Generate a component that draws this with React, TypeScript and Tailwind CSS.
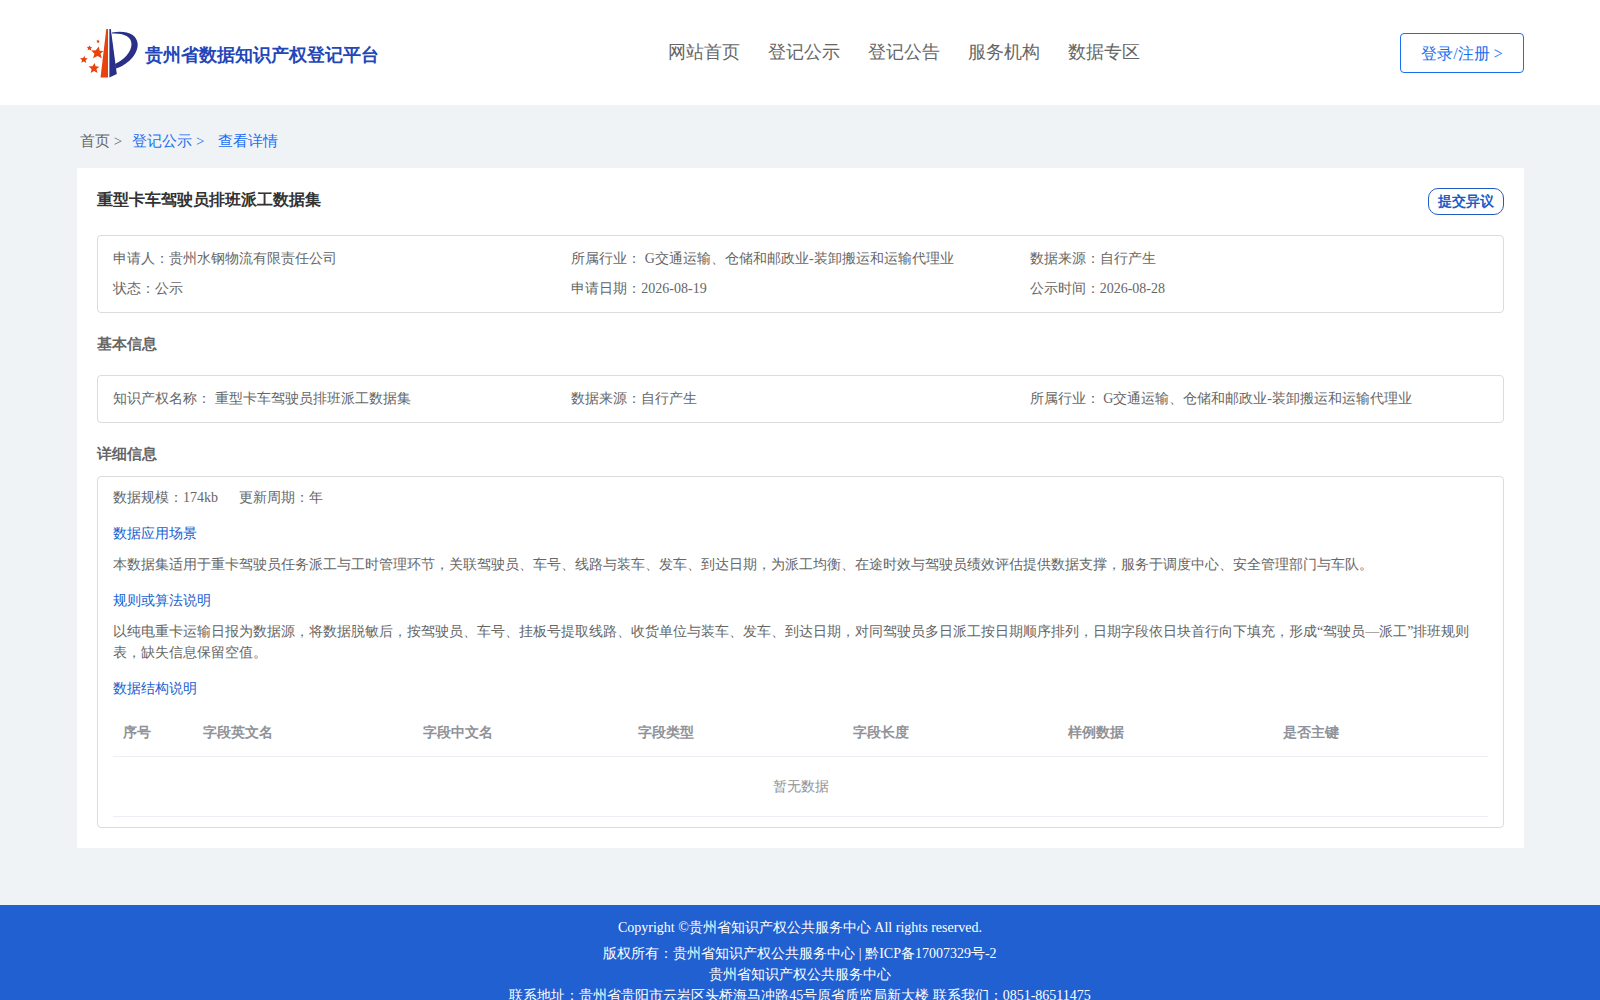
import React from 'react';

const navItems = ['网站首页', '登记公示', '登记公告', '服务机构', '数据专区'];

const summary = [
  '申请人：贵州水钢物流有限责任公司',
  '所属行业： G交通运输、仓储和邮政业-装卸搬运和运输代理业',
  '数据来源：自行产生',
  '状态：公示',
  '申请日期：2026-08-19',
  '公示时间：2026-08-28',
];

const basicInfo = [
  '知识产权名称： 重型卡车驾驶员排班派工数据集',
  '数据来源：自行产生',
  '所属行业： G交通运输、仓储和邮政业-装卸搬运和运输代理业',
];

const columns = ['序号', '字段英文名', '字段中文名', '字段类型', '字段长度', '样例数据', '是否主键'];

const Logo = () => (
  <svg viewBox="0 0 58 52" className="h-[52px] w-[58px]" aria-hidden="true">
    <path d="M26.300 2h1.700v48.500h-7.500z" fill="#e8430f" />
    <path d="M29.400 2h1.400L36.800 47l-7.400 3.500z" fill="#2a2f87" />
    <path
      d="M32 5.500C46 3 57 7 57.700 17C58 28 47 38 36 41.500L35 37C44 33 51.500 25 51.500 17C51.500 9 43 6 32 6.500z"
      fill="#2a2f87"
    />
    <g fill="#e8430f">
      <path d="M18.800 19.500l.9 4.200 3.800.3-3 2.500 1.300 4.800-4.200-2.400-4.500 2.400 1.300-4.600-3.200-3.200 4.600-.2z" />
      <path d="M14.700 36l.8 3.300 3.900.4-3 2.300 1.200 4-3.600-2-3.300 2 .9-3.900-3.200-2.600 4-.2z" />
      <path d="M4.300 28.800l.8 2.300 2.600.4-2 1.700.5 2.700-2.300-1.300-2.600 1.200.8-2.600L.100 31.200l3-.2z" />
      <path d="M9.800 18.400l.6 1.500 1.700.3-1.200 1.200.2 2-1.700-1-1.800.8.500-1.900-1.300-1.400 2-.1z" />
      <path d="M18 12.600l.5 1 1.200.3-.8.8.2 1.300-1.100-.6-1.200.4.300-1.200-.8-.9 1.300-.1z" />
    </g>
  </svg>
);

const InfoBox = ({ items }: { items: string[] }) => (
  <div className="grid grid-cols-3 rounded border border-[#dcdcdc] px-[15px] py-2">
    {items.map((item) => (
      <p key={item} className="leading-[30px]">{item}</p>
    ))}
  </div>
);

const App = () => {
  return (
    <div className="min-h-screen bg-[#eff3f6] font-['Liberation_Serif',serif] text-sm text-[#666666]">
      <header className="flex h-[105px] items-center justify-between bg-white pr-[76px] pl-20">
        <div className="flex items-center gap-[7px] pr-[29px]">
          <Logo />
          <h1 className="pt-[5px] text-lg font-bold text-[#2346b8]">贵州省数据知识产权登记平台</h1>
        </div>
        <nav className="flex gap-7 pb-[2px] text-lg">
          {navItems.map((item) => (
            <a key={item} href="#">{item}</a>
          ))}
        </nav>
        <button className="h-10 w-[124px] rounded border border-[#1a6ff0] pt-[2px] text-base text-[#1a6ff0]">
          登录/注册 &gt;
        </button>
      </header>

      <nav className="flex h-[63px] items-center pt-[10px] pl-20 text-[15px]">
        <a href="#" className="mr-[10px]">首页 &gt;</a>
        <a href="#" className="mr-[14px] text-[#1a6ff0]">登记公示 &gt;</a>
        <a href="#" className="text-[#1a6ff0]">查看详情</a>
      </nav>

      <main className="mr-[76px] mb-[57px] ml-[77px] bg-white p-5">
        <div className="mb-5 flex items-start justify-between">
          <h2 className="text-base font-bold text-[#333333]">重型卡车驾驶员排班派工数据集</h2>
          <button className="h-[27px] rounded-[10px] border border-[#205bc4] px-[9px] font-bold text-[#205bc4]">
            提交异议
          </button>
        </div>

        <InfoBox items={summary} />

        <h3 className="my-5 text-[15px] leading-[22px] font-bold">基本信息</h3>
        <InfoBox items={basicInfo} />

        <h3 className="mt-5 mb-[11px] text-[15px] leading-[22px] font-bold">详细信息</h3>
        <section className="rounded border border-[#dcdcdc] px-[15px] py-[10px] leading-[21px]">
          <p className="flex gap-[21px]">
            <span>数据规模：174kb</span>
            <span>更新周期：年</span>
          </p>
          <h4 className="mt-[15px] mb-[10px] text-[#2060d0]">数据应用场景</h4>
          <p>
            本数据集适用于重卡驾驶员任务派工与工时管理环节，关联驾驶员、车号、线路与装车、发车、到达日期，为派工均衡、在途时效与驾驶员绩效评估提供数据支撑，服务于调度中心、安全管理部门与车队。
          </p>
          <h4 className="mt-[15px] mb-[10px] text-[#2060d0]">规则或算法说明</h4>
          <p>
            以纯电重卡运输日报为数据源，将数据脱敏后，按驾驶员、车号、挂板号提取线路、收货单位与装车、发车、到达日期，对同驾驶员多日派工按日期顺序排列，日期字段依日块首行向下填充，形成“驾驶员—派工”排班规则表，缺失信息保留空值。
          </p>
          <h4 className="mt-[15px] mb-[10px] text-[#2060d0]">数据结构说明</h4>
          <table className="w-full table-fixed border-separate border-spacing-0 text-[#909399]">
            <colgroup>
              <col className="w-20" />
              <col className="w-[220px]" />
            </colgroup>
            <thead>
              <tr className="h-12">
                {columns.map((column) => (
                  <th key={column} className="border-b border-[#ebeef5] px-[10px] text-left font-bold">{column}</th>
                ))}
              </tr>
            </thead>
            <tbody>
              <tr className="h-[60px]">
                <td colSpan={columns.length} className="border-b border-[#ebeef5] text-center">暂无数据</td>
              </tr>
            </tbody>
          </table>
        </section>
      </main>

      <footer className="bg-[#2060d0] py-3 text-center leading-[21px] text-white">
        <p className="mb-[5px]">Copyright ©贵州省知识产权公共服务中心 All rights reserved.</p>
        <p>版权所有：贵州省知识产权公共服务中心 | 黔ICP备17007329号-2</p>
        <p>贵州省知识产权公共服务中心</p>
        <p>联系地址：贵州省贵阳市云岩区头桥海马冲路45号原省质监局新大楼 联系我们：0851-86511475</p>
      </footer>
    </div>
  );
};

export default App;
